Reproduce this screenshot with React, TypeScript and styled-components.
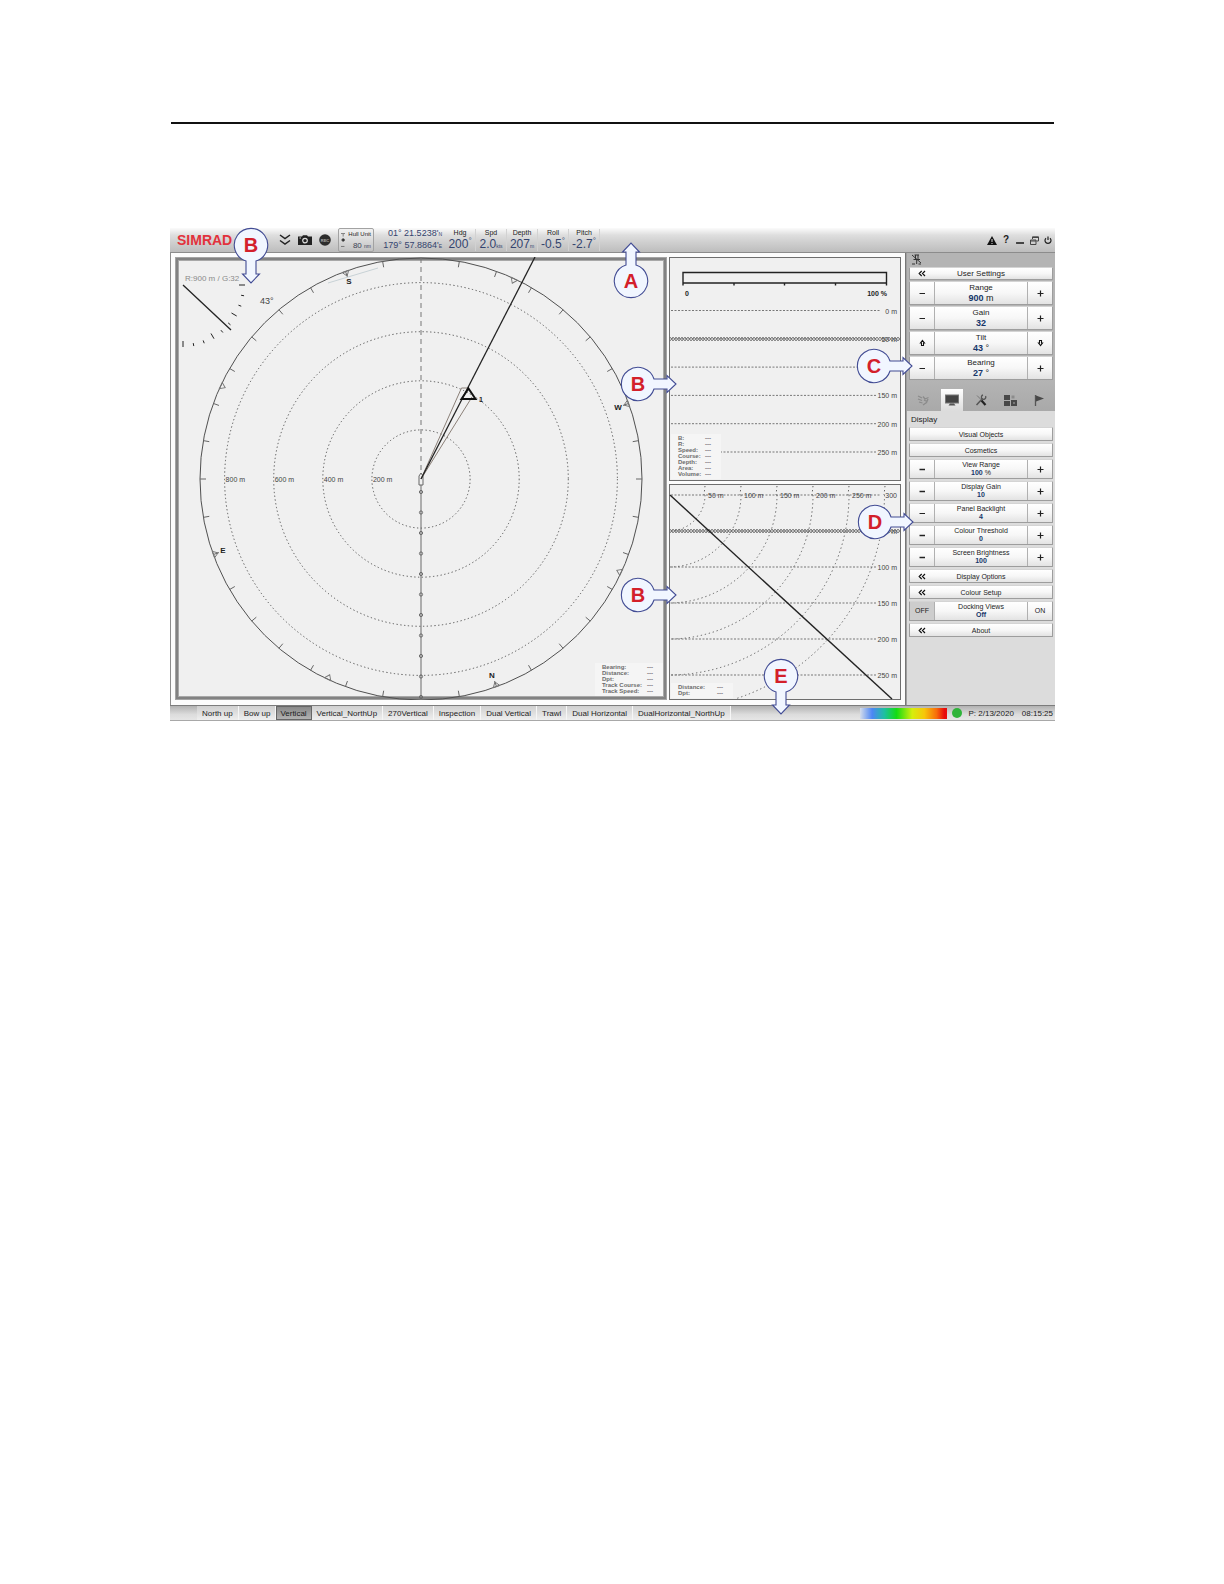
import React from 'react';
import styled, { createGlobalStyle, css } from 'styled-components';

const GlobalStyle = createGlobalStyle`
  * { box-sizing: border-box; }
  body { margin: 0; background: #fff; }
  body, button { font-family: "Liberation Sans", Arial, sans-serif; }
  button { margin: 0; padding: 0; border: 0; background: none; color: inherit; cursor: pointer; }
  svg text { font-family: "Liberation Sans", Arial, sans-serif; }
`;

/* ---------- page ---------- */

const Page = styled.main`
  padding: 122px 169px 0 170px;
`;

const Rule = styled.hr`
  margin: 0 1px 104px;
  border: 0;
  border-top: 2px solid #111;
`;

const Console = styled.section`
  color: #1c1c1c;
  font-size: 8px;
  line-height: 9px;
`;

const Bar = styled.header`
  position: relative;
  display: flex;
  align-items: center;
  height: 25px;
  border-bottom: 1px solid #8c8c8c;
  background: linear-gradient(#fbfbfb, #dedede 30%, #cfcfcf 60%, #bdbdbd);
`;

const Body = styled.div`
  display: flex;
`;

/* ---------- top bar ---------- */

const Logo = styled.span`
  width: 98px;
  padding-left: 7px;
  color: #e2323c;
  font-size: 14px;
  font-weight: bold;
  line-height: 16px;
`;

const Tools = styled.div`
  display: flex;
  align-items: center;
  gap: 6px;
  padding-left: 10px;
`;

const IconButton = styled.button`
  display: grid;
  place-items: center;
  width: 14px;
  height: 16px;
  line-height: 0;
`;

const HullUnit = styled.button`
  display: flex;
  align-items: center;
  gap: 3px;
  width: 36px;
  height: 24px;
  margin: 0 7px 0 6px;
  padding: 0 2px;
  border: 1px solid #a2a2a2;
  border-radius: 2px;
  background: linear-gradient(#f2f2f2, #c2c2c2);
  color: #222;
  font-size: 6px;
  line-height: 11px;
  text-align: right;
  white-space: nowrap;
`;

const HullValue = styled.span`
  display: block;
  color: #3c4255;
  font-size: 8px;

  small { font-size: 5px; }
`;

const Position = styled.div`
  width: 61px;
  color: #34446e;
  font-size: 9px;
  line-height: 11px;
  text-align: right;
  white-space: nowrap;

  small { font-size: 5px; }
`;

const Readouts = styled.div`
  display: flex;
  padding-left: 3px;
`;

const Readout = styled.div`
  display: flex;
  flex-direction: column;
  align-items: center;
  width: 31px;
  height: 22px;
  border-right: 1px solid #d2d2d2;
  color: #222;
  font-size: 7px;
  line-height: 8px;
  white-space: nowrap;
`;

const ReadoutValue = styled.span`
  color: #34446e;
  font-size: 12px;
  line-height: 14px;

  small { font-size: 5px; }
  sup { font-size: 8px; line-height: 0; }
`;

const WindowTools = styled.div`
  display: flex;
  margin-left: auto;
`;

const HelpMark = styled.span`
  font-size: 10px;
  font-weight: bold;
  line-height: 12px;
`;

/* ---------- views ---------- */

const Views = styled.div`
  flex: 1;
  min-width: 0;
  display: grid;
  grid-template-columns: minmax(0, 492fr) minmax(0, 232fr);
  gap: 2px;
  padding: 4px 4px 5px;
  border-left: 1px solid #8c8c8c;
  border-right: 1px solid #777;
  background: #fcfcfc;
`;

const ViewColumn = styled.div`
  display: flex;
  flex-direction: column;
  gap: 3px;
`;

const View = styled.div<{ $active?: boolean }>`
  position: relative;
  background: #f0f0f0;
  box-shadow: ${p => p.$active
    ? 'inset 0 0 0 1px #a4a4a4, inset 0 0 0 3px #828282, inset 0 0 0 4px #a8a8a8'
    : 'inset 0 0 0 1px #6e6e6e'};
`;

const Plot = styled.svg`
  display: block;
  width: 100%;
  height: auto;
`;

const InfoList = styled.dl<{ $side: 'left' | 'right'; $width: number }>`
  position: absolute;
  bottom: ${p => (p.$side === 'right' ? 4 : 2)}px;
  ${p => (p.$side === 'right' ? 'right: 4px;' : 'left: 2px;')}
  display: grid;
  grid-template-columns: 1fr 16px;
  width: ${p => p.$width}px;
  margin: 0;
  padding: 1px 0 2px 7px;
  background: #f5f5f5;
  color: #6c6c6c;
  font-size: 6px;
  font-weight: bold;
  line-height: 6px;

  dd { margin: 0; }
  dt, dd { height: 6px; white-space: nowrap; }
`;

/* ---------- callouts ---------- */

type Direction = 'up' | 'down' | 'left' | 'right';

const CalloutBox = styled.span<{ $x: number; $y: number }>`
  position: absolute;
  z-index: 3;
  left: ${p => p.$x - 40}px;
  top: ${p => p.$y - 40}px;
  width: 80px;
  height: 80px;
  pointer-events: none;

  svg { position: absolute; inset: 0; }
`;

const CalloutLetter = styled.b`
  position: relative;
  display: grid;
  place-items: center;
  height: 80px;
  color: #d3202c;
  font-size: 20px;
  line-height: 22px;
`;

const turn: Record<Direction, number> = { up: 0, right: 90, down: 180, left: 270 };

function Callout({ letter, x, y, to }: { letter: string; x: number; y: number; to: Direction }) {
  return (
    <CalloutBox $x={x} $y={y}>
      <svg width="80" height="80" viewBox="-40 -40 80 80" aria-hidden="true">
        <path
          transform={`rotate(${turn[to]})`}
          d="M-5 -16 V-29 H-8.500 L0 -38 L8.500 -29 H5 V-16 A16.700 16.700 0 1 1 -5 -16 Z"
          fill="#f1f6ff"
          stroke="#424c94"
          strokeWidth="1.100"
        />
      </svg>
      <CalloutLetter>{letter}</CalloutLetter>
    </CalloutBox>
  );
}

/* ---------- sidebar ---------- */

const Sidebar = styled.aside`
  position: relative;
  display: flex;
  flex-direction: column;
  width: 149px;
  border-left: 1px solid #a0a0a0;
  background: #dcdcdc;
`;

const UserPanel = styled.div`
  display: flex;
  flex-direction: column;
  gap: 1px;
  padding: 0 2px;
  background: #b4b4b4;
`;

const PinButton = styled.button`
  width: 14px;
  height: 13px;
  line-height: 0;
`;

const Tabs = styled.div`
  display: flex;
  align-items: flex-end;
  gap: 7px;
  height: 31px;
  padding-left: 5px;
  background: linear-gradient(#b4b4b4, #a9a9a9);
`;

const Tab = styled.button<{ $active?: boolean }>`
  display: grid;
  place-items: center;
  width: 22px;
  height: 22px;
  line-height: 0;
  ${p => p.$active && css`
    background: linear-gradient(#fff, #dcdcdc);
  `}
`;

const SectionTitle = styled.h2`
  margin: 0;
  padding: 4px 4px 3px;
  font-size: 8px;
  font-weight: normal;
  line-height: 9px;
`;

const DisplayPanel = styled.div`
  display: flex;
  flex-direction: column;
  gap: 2px;
  padding: 0 2px;
`;

const face = css`
  border: 1px solid #9d9d9d;
  border-top-color: #d4d4d4;
  border-radius: 1px;
  background: linear-gradient(#fff, #f7f7f7 50%, #e3e3e3);
`;

const WideButton = styled.button<{ $large?: boolean }>`
  ${face}
  display: grid;
  grid-template-columns: 23px 1fr 23px;
  align-items: center;
  height: ${p => (p.$large ? 13 : 14)}px;
  font-size: ${p => (p.$large ? 8 : 7)}px;
  line-height: 9px;
`;

const Name = styled.span`
  grid-column: 2;
`;

const Setting = styled.div<{ $large?: boolean }>`
  ${face}
  display: grid;
  grid-template-columns: 24px 1fr 24px;
  height: ${p => (p.$large ? 24 : 20)}px;
  font-size: ${p => (p.$large ? 8 : 7)}px;
`;

const Reading = styled.div<{ $large?: boolean }>`
  display: flex;
  flex-direction: column;
  align-items: center;
  justify-content: center;
  border: 0 solid #b0b0b0;
  border-width: 0 1px;
  line-height: ${p => (p.$large ? 10 : 8)}px;

  output { font-size: ${p => (p.$large ? 9 : 7)}px; }
  b { color: #16366a; }
`;

const Step = styled.button<{ $pressed?: boolean }>`
  display: grid;
  place-items: center;
  font-size: 7px;
  line-height: 8px;
  ${p => p.$pressed && css`background: #cdcdcd;`}
`;

/* ---------- status bar ---------- */

const StatusBar = styled.footer`
  position: relative;
  display: flex;
  align-items: center;
  height: 16px;
  border-top: 1px solid #7c7c7c;
  border-bottom: 1px solid #a8a8a8;
  background: linear-gradient(#b2b2b2, #dcdcdc 60%, #e6e6e6);
  white-space: nowrap;
`;

const ViewTabs = styled.nav`
  display: flex;
  align-items: stretch;
  height: 14px;
  padding-left: 27px;
`;

const ViewTab = styled.button<{ $active?: boolean }>`
  padding: 0 5px;
  border-right: 1px solid #f6f6f6;
  background: linear-gradient(#cfcfcf, #efefef);
  font-size: 8px;
  line-height: 9px;
  ${p => p.$active && css`
    padding: 0 4px;
    border-right-color: #666;
    background: linear-gradient(#868686, #b4b4b4);
    box-shadow: inset 1px 1px 0 #666, inset 0 -1px 0 #666;
  `}
`;

const ColourScale = styled.div`
  width: 87px;
  height: 11px;
  margin-left: auto;
  background: linear-gradient(90deg, #d4dcea, #4c86f5 14%, #1ec0a0 28%, #14dc14 42%, #d6ee0c 60%, #f7c60a 74%, #f76c0a 88%, #e80c0c 97%);
`;

const StatusDot = styled.span`
  width: 10px;
  height: 10px;
  margin: 0 6px 0 5px;
  border-radius: 50%;
  background: #2fb43a;
`;

const Stamp = styled.time`
  margin-right: 8px;
  &:last-of-type { margin-right: 2px; }
`;

/* ---------- icons ---------- */

const Minus = ({ bold }: { bold?: boolean }) => (
  <svg width="7" height="7" viewBox="0 0 7 7"><path d="M.5 3.500H6" stroke="#222" strokeWidth={bold ? 1.5 : 1} /></svg>
);
const Plus = () => (
  <svg width="7" height="7" viewBox="0 0 7 7"><path d="M.5 3.500H6.500M3.500 .5V6.500" stroke="#222" strokeWidth="1.200" /></svg>
);
const Arrow = ({ down }: { down?: boolean }) => (
  <svg width="7" height="8" viewBox="0 0 7 8">
    <path transform={down ? 'rotate(180 3.5 4)' : undefined} d="M3.500 1.500L5.500 4H4.500V6.500H2.500V4H1.500Z" fill="#fff" stroke="#111" strokeWidth="1.100" />
  </svg>
);
const BackIcon = styled.svg`
  justify-self: center;
`;
const Back = () => (
  <BackIcon width="8" height="7" viewBox="0 0 8 7">
    <path d="M3.700 1L1.200 3.500L3.700 6M7 1L4.500 3.500L7 6" fill="none" stroke="#111" strokeWidth="1.200" />
  </BackIcon>
);

const tabIcons = [
  {
    label: 'Operation',
    icon: <svg width="13" height="13" viewBox="0 0 13 13" fill="none" stroke="#8b8b8b"><path d="M1 2L5 4M1 5L5 6.500M2 8L5.500 9M6 2.500L8 5L11.500 3.500M7 6L10 7.500M6 11L9.500 8.500L11 5" strokeWidth="1.300" /></svg>,
  },
  {
    label: 'Display',
    icon: <svg width="14" height="12" viewBox="0 0 14 12"><rect x=".5" y="1" width="13" height="8" fill="#444" stroke="#777" /><path d="M5 9.500H9L10.500 11.500H3.500Z" fill="#555" /></svg>,
  },
  {
    label: 'Setup',
    icon: <svg width="12" height="12" viewBox="0 0 12 12" fill="none"><path d="M1.500 11L7.500 4.500" stroke="#555" strokeWidth="1.500" /><path d="M10.500 2A2.200 2.200 0 1 1 8 1" stroke="#555" strokeWidth="1.300" /><path d="M2 1.500L6 5.500" stroke="#777" /><path d="M6.500 6.500L10.500 11" stroke="#222" strokeWidth="2.200" /></svg>,
  },
  {
    label: 'Views',
    icon: <svg width="13" height="13" viewBox="0 0 13 13"><path d="M0 1H6V6H0ZM0 7H6V12H0ZM7 6H13V12H7Z" fill="#484848" /><path d="M7.500 1.500H10.500V4.500H7.500Z" fill="#8c8c8c" /><path d="M9 9H11" stroke="#a8a8a8" /></svg>,
  },
  {
    label: 'Markers',
    icon: <svg width="12" height="13" viewBox="0 0 12 13"><path d="M2.500 1V12" stroke="#555" strokeWidth="1.300" /><path d="M3 1.500L11 4.500L3 7.500Z" fill="#484848" /></svg>,
  },
];

/* ---------- plots ---------- */

const polar = (cx: number, cy: number, r: number, deg: number) => {
  const a = (deg * Math.PI) / 180;
  return [cx + r * Math.sin(a), cy - r * Math.cos(a)];
};

const CX = 246;
const CY = 222;
const R = 221;

function SonarPlot() {
  const bearings = Array.from({ length: 36 }, (_, i) => i * 10);
  const markers = [25, 70, 115, 160, 205, 250, 295, 340];
  const trail = Array.from({ length: 11 }, (_, i) => 235 + i * 20.5);
  const tilt = Array.from({ length: 10 }, (_, i) => i);
  return (
    <Plot viewBox="0 0 492 443" role="img" aria-label="Sonar view">
      <g fill="none" stroke="#6a6a6a">
        {[1, 2, 3, 4].map(n => (
          <circle key={n} cx={CX} cy={CY} r={49.1 * n} stroke="#555" strokeDasharray="1.300 2.500" />
        ))}
        <circle cx={CX} cy={CY} r={R} stroke="#505050" />
        {bearings.filter(b => b % 180 !== 0).map(b => {
          const [x1, y1] = polar(CX, CY, R, b);
          const [x2, y2] = polar(CX, CY, R - 6, b);
          return <line key={b} x1={x1} y1={y1} x2={x2} y2={y2} stroke="#666" />;
        })}
        <line x1={CX} y1="1" x2={CX} y2={CY} strokeDasharray="5 4" stroke="#777" />
        <line x1={CX} y1={CY} x2={CX} y2="442" />
        {markers.map(b => (
          <path key={b} d={`M${CX - 3.5} 1H${CX + 3.5}L${CX} 6Z`} transform={`rotate(${b} ${CX} ${CY})`} stroke="#777" strokeWidth=".9" />
        ))}
        {trail.map(y => <circle key={y} cx={CX} cy={y} r="1.600" />)}
        <path d="M153 26L203 11" stroke="#c8d2d6" />
      </g>
      <path d="M244 228V219L246 216L248 219V228Z" fill="#f0f0f0" stroke="#666" />
      <g fill="none">
        <path d="M246 222L286.500 131H294M246 222L297 140" stroke="#8b8078" />
        <path d="M246 222L360 0" stroke="#222" strokeWidth="1.300" />
        <path d="M293.500 131.500L300.500 142H286.500Z" stroke="#111" strokeWidth="2" />
      </g>
      <g stroke="#222">
        <path d="M8 28L56 73" strokeWidth="1.300" />
        {tilt.map(i => {
          const long = i % 3 === 0;
          const [x1, y1] = polar(8, 28, long ? 56 : 59, 90 + i * 10);
          const [x2, y2] = polar(8, 28, 62, 90 + i * 10);
          return <line key={i} x1={x1} y1={y1} x2={x2} y2={y2} />;
        })}
      </g>
      <g fontSize="8" fontWeight="bold" fill="#222" textAnchor="middle">
        <text x="174" y="27">S</text>
        <text x="443" y="153">W</text>
        <text x="317" y="421">N</text>
        <text x="48" y="296">E</text>
        <text x="306" y="145" fontSize="7">1</text>
      </g>
      <g fontSize="7" fill="#444">
        {[200, 400, 600, 800].map((m, i) => (
          <text key={m} x={CX - 49.1 * (i + 1) + 1} y="225">{m} m</text>
        ))}
      </g>
      <text x="10" y="24" fontSize="8" fill="#8a8a8a">R:900 m / G:32</text>
      <text x="85" y="47" fontSize="9" fill="#444">43°</text>
    </Plot>
  );
}

function Bottom({ y }: { y: number }) {
  const points = (flip: number) =>
    Array.from({ length: 78 }, (_, i) => `${1 + i * 3},${y + (i % 2 === flip ? -2 : 2)}`).join(' ');
  return (
    <g fill="none" stroke="#666" strokeWidth=".8">
      <polyline points={points(0)} />
      <polyline points={points(1)} />
    </g>
  );
}

function DepthLines({ start, step, depths }: { start: number; step: number; depths: number[] }) {
  return (
    <>
      {[0, 50, 100, 150, 200, 250].map((depth, n) => (
        <g key={depth}>
          <line x1="2" x2={n === 0 ? 212 : 208} y1={start + n * step} y2={start + n * step} stroke="#777" strokeDasharray="2 1.500" />
          {depths.includes(depth) && (
            <text x="228" y={start + n * step + 3} fontSize="7" fill="#444" textAnchor="end">{depth} m</text>
          )}
        </g>
      ))}
    </>
  );
}

function VerticalPlot() {
  return (
    <Plot viewBox="0 0 232 224" role="img" aria-label="Vertical view with scale">
      <path d="M14 15.500H217.500V26H14ZM14 26V28.500M65 26V28.500M115.500 26V28.500M166.500 26V28.500M217.500 26V28.500" fill="none" stroke="#222" strokeWidth="1.400" />
      <g fontSize="7" fontWeight="bold" fill="#222">
        <text x="16" y="39">0</text>
        <text x="218" y="39" textAnchor="end">100 %</text>
      </g>
      <DepthLines start={53.5} step={28.3} depths={[0, 50, 150, 200, 250]} />
      <Bottom y={82} />
    </Plot>
  );
}

function SlicePlot() {
  return (
    <Plot viewBox="0 0 232 216" role="img" aria-label="Vertical slice view">
      <DepthLines start={11} step={36} depths={[50, 100, 150, 200, 250]} />
      {[1, 2, 3, 4, 5, 6].map(n => (
        <g key={n}>
          <path
            d={n === 6
              ? 'M215.500 11A215.500 215.500 0 0 1 66 215'
              : `M${n * 36} 11A${n * 36} ${n * 36} 0 0 1 1 ${11 + n * 36}`}
            fill="none" stroke="#5c5c5c" strokeDasharray="1.300 2.800"
          />
          <path d={`M${n * 36} 2L${n * 36 - 1} 11`} stroke="#5c5c5c" strokeDasharray="1.300 2.800" />
          <text x={n === 6 ? 228 : n * 36 + 3} y="14" fontSize="7" fill="#444" textAnchor={n === 6 ? 'end' : 'start'}>
            {n === 6 ? '300' : `${n * 50} m`}
          </text>
        </g>
      ))}
      <Bottom y={47} />
      <path d="M1 11L223 215" stroke="#222" strokeWidth="1.400" />
    </Plot>
  );
}

/* ---------- data ---------- */

const readouts = [
  { name: 'Hdg', value: '200', unit: <sup>°</sup> },
  { name: 'Spd', value: '2.0', unit: <small>kts</small> },
  { name: 'Depth', value: '207', unit: <small>m</small> },
  { name: 'Roll', value: '-0.5', unit: <sup>°</sup> },
  { name: 'Pitch', value: '-2.7', unit: <sup>°</sup> },
];

const userSettings = [
  { name: 'Range', value: '900', unit: ' m' },
  { name: 'Gain', value: '32' },
  { name: 'Tilt', value: '43', unit: ' °', arrows: true },
  { name: 'Bearing', value: '27', unit: ' °' },
];

const displaySettings = [
  { name: 'View Range', value: '100', unit: ' %' },
  { name: 'Display Gain', value: '10' },
  { name: 'Panel Backlight', value: '4', thin: true },
  { name: 'Colour Threshold', value: '0' },
  { name: 'Screen Brightness', value: '100' },
];

const viewTabs = ['North up', 'Bow up', 'Vertical', 'Vertical_NorthUp', '270Vertical', 'Inspection', 'Dual Vertical', 'Trawl', 'Dual Horizontal', 'DualHorizontal_NorthUp'];

interface StepperProps {
  name: string;
  value: string;
  unit?: string;
  large?: boolean;
  arrows?: boolean;
  thin?: boolean;
}

function Stepper({ name, value, unit, large, arrows, thin }: StepperProps) {
  return (
    <Setting $large={large}>
      <Step aria-label={`${name} down`}>{arrows ? <Arrow /> : <Minus bold={!large && !thin} />}</Step>
      <Reading $large={large}>
        <span>{name}</span>
        <output><b>{value}</b>{unit}</output>
      </Reading>
      <Step aria-label={`${name} up`}>{arrows ? <Arrow down /> : <Plus />}</Step>
    </Setting>
  );
}

function Info({ rows, side, width }: { rows: string[]; side: 'left' | 'right'; width: number }) {
  return (
    <InfoList $side={side} $width={width}>
      {rows.map(r => (
        <React.Fragment key={r}>
          <dt>{r}:</dt>
          <dd>---</dd>
        </React.Fragment>
      ))}
    </InfoList>
  );
}

export default function App() {
  return (
    <Page>
      <GlobalStyle />
      <Rule />
      <Console>
        <Bar>
          <Logo>SIMRAD</Logo>
          <Tools>
            <IconButton aria-label="Expand">
              <svg width="12" height="12" viewBox="0 0 12 12" fill="none" stroke="#222" strokeWidth="1.500"><path d="M1 1L6 4.500L11 1M1 6.500L6 10L11 6.500" /></svg>
            </IconButton>
            <IconButton aria-label="Screen capture">
              <svg width="14" height="10" viewBox="0 0 14 10"><path d="M0 1.500H4L5 .3H9L10 1.500H14V10H0Z" fill="#222" /><circle cx="7" cy="5.600" r="2.300" fill="none" stroke="#ddd" strokeWidth="1.200" /><path d="M1.500 3H3" stroke="#ddd" /></svg>
            </IconButton>
            <IconButton aria-label="Record">
              <svg width="12" height="12" viewBox="0 0 12 12"><circle cx="6" cy="6" r="5.800" fill="#2c2c2c" /><text x="6" y="7.500" fontSize="4" fontWeight="bold" fill="#aaa" textAnchor="middle">REC</text></svg>
            </IconButton>
          </Tools>
          <HullUnit>
            <svg width="5" height="18" viewBox="0 0 5 18" stroke="#555"><path d="M0 1.500H5M2.500 2V5M0 16.500H4" strokeWidth=".8" /><circle cx="2.500" cy="9" r="1.500" fill="#222" /></svg>
            <span>Hull Unit<HullValue>80 <small>nm</small></HullValue></span>
          </HullUnit>
          <Position>
            <div>01° 21.5238'<small>N</small></div>
            <div>179° 57.8864'<small>E</small></div>
          </Position>
          <Readouts>
            {readouts.map(r => (
              <Readout key={r.name}>
                {r.name}
                <ReadoutValue>{r.value}{r.unit}</ReadoutValue>
              </Readout>
            ))}
          </Readouts>
          <WindowTools>
            <IconButton aria-label="Warnings">
              <svg width="10" height="9" viewBox="0 0 10 9"><path d="M5 0L10 9H0Z" fill="#111" /><path d="M5 3V6M5 7V8" stroke="#ddd" /></svg>
            </IconButton>
            <IconButton aria-label="Help"><HelpMark>?</HelpMark></IconButton>
            <IconButton aria-label="Minimise">
              <svg width="8" height="8" viewBox="0 0 8 8"><path d="M0 7H8" stroke="#222" strokeWidth="1.600" /></svg>
            </IconButton>
            <IconButton aria-label="Restore">
              <svg width="9" height="9" viewBox="0 0 9 9" fill="none" stroke="#444"><path d="M2.500 3V.8H8.500V5H6.500M2.500 1.500H8.500M.5 4H6V8.500H.5ZM.5 5H6" /></svg>
            </IconButton>
            <IconButton aria-label="Power">
              <svg width="8" height="9" viewBox="0 0 8 9" fill="none" stroke="#222" strokeWidth="1.200"><path d="M2 2.200A3 3 0 1 0 6 2.200M4 .5V4" /></svg>
            </IconButton>
          </WindowTools>
          <Callout letter="A" x={461} y={53} to="up" />
        </Bar>

        <Body>
          <Views>
            <View $active>
              <SonarPlot />
              <Info side="right" width={68} rows={['Bearing', 'Distance', 'Dpt', 'Track Course', 'Track Speed']} />
              <Callout letter="B" x={76} y={-12} to="down" />
            </View>
            <ViewColumn>
              <View>
                <VerticalPlot />
                <Info side="left" width={50} rows={['B', 'R', 'Speed', 'Course', 'Depth', 'Area', 'Volume']} />
                <Callout letter="B" x={-31} y={127} to="right" />
              </View>
              <View>
                <SlicePlot />
                <Info side="left" width={62} rows={['Distance', 'Dpt']} />
                <Callout letter="B" x={-31} y={111} to="right" />
              </View>
            </ViewColumn>
          </Views>

          <Sidebar>
            <UserPanel>
              <PinButton aria-label="Pin menu">
                <svg width="11" height="11" viewBox="0 0 11 11" fill="none" stroke="#333"><path d="M3.500 1H8M4.500 1V5M7 1V5M2.500 5.500H9M5.700 6V10M1 1L10 9M1 10H4M7.500 10H10" /></svg>
              </PinButton>
              <WideButton $large><Back /><Name>User Settings</Name></WideButton>
              {userSettings.map(s => <Stepper key={s.name} large {...s} />)}
            </UserPanel>
            <Tabs role="tablist">
              {tabIcons.map(t => (
                <Tab key={t.label} role="tab" aria-label={t.label} aria-selected={t.label === 'Display'} $active={t.label === 'Display'}>
                  {t.icon}
                </Tab>
              ))}
            </Tabs>
            <SectionTitle>Display</SectionTitle>
            <DisplayPanel>
              <WideButton><Name>Visual Objects</Name></WideButton>
              <WideButton><Name>Cosmetics</Name></WideButton>
              {displaySettings.map(s => <Stepper key={s.name} {...s} />)}
              <WideButton><Back /><Name>Display Options</Name></WideButton>
              <WideButton><Back /><Name>Colour Setup</Name></WideButton>
              <Setting>
                <Step $pressed>OFF</Step>
                <Reading><span>Docking Views</span><output><b>Off</b></output></Reading>
                <Step>ON</Step>
              </Setting>
              <WideButton><Back /><Name>About</Name></WideButton>
            </DisplayPanel>
            <Callout letter="C" x={-33} y={113} to="right" />
            <Callout letter="D" x={-32} y={269} to="right" />
          </Sidebar>
        </Body>

        <StatusBar>
          <ViewTabs>
            {viewTabs.map(t => <ViewTab key={t} $active={t === 'Vertical'}>{t}</ViewTab>)}
          </ViewTabs>
          <ColourScale />
          <StatusDot />
          <Stamp>P: 2/13/2020</Stamp>
          <Stamp>08:15:25</Stamp>
          <Callout letter="E" x={611} y={-30} to="down" />
        </StatusBar>
      </Console>
    </Page>
  );
}
